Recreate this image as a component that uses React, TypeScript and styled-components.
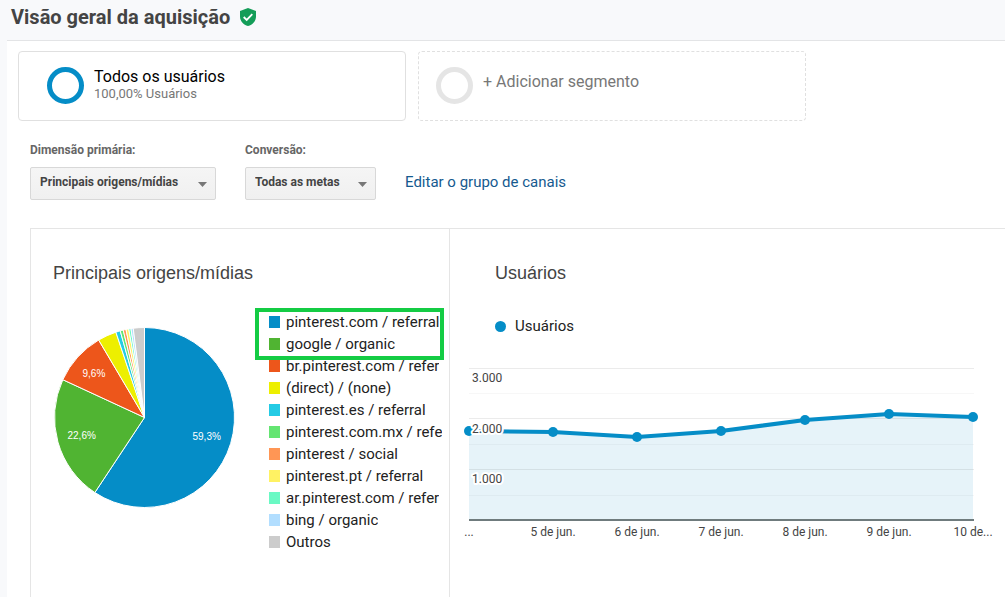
import React from "react";
import styled, { createGlobalStyle } from "styled-components";

const GlobalStyle = createGlobalStyle`
  *, *::before, *::after { box-sizing: border-box; }
  body {
    margin: 0;
    background: #f8f9fb;
    color: #222;
    font-family: Roboto, "Liberation Sans", sans-serif;
  }
  h1, h2, ul { margin: 0; padding: 0; }
`;

const Page = styled.div`
  display: flex;
  flex-direction: column;
  min-height: 100vh;
`;

const Header = styled.header`
  display: flex;
  align-items: center;
  gap: 10px;
  height: 40px;
  padding: 0 11px 6px;
`;

const PageTitle = styled.h1`
  font-size: 20px;
  line-height: 24px;
  font-weight: 700;
  color: #444;
`;

const Content = styled.main`
  flex: 1;
  display: flex;
  flex-direction: column;
  margin-left: 7px;
  padding: 10px 0 0 11px;
  border-top: 1px solid #e3e4e6;
  background: #fff;
`;

const Segments = styled.div`
  display: flex;
  gap: 12px;
`;

const Segment = styled.button<{ $empty?: boolean }>`
  display: flex;
  align-items: center;
  flex: 0 1 388px;
  height: 70px;
  padding: 0 ${(p) => (p.$empty ? 17 : 28)}px 2px;
  gap: 10px;
  border: 1px ${(p) => (p.$empty ? "dashed" : "solid")} #e0e0e0;
  border-radius: 4px;
  background: #fff;
  font-family: inherit;
  text-align: left;
  cursor: pointer;
`;

const Ring = styled.span<{ $color: string }>`
  flex: none;
  width: 37px;
  height: 37px;
  border: 5px solid ${(p) => p.$color};
  border-radius: 50%;
`;

const SegmentText = styled.span`
  display: flex;
  flex-direction: column;
`;

const SegmentName = styled.span<{ $muted?: boolean }>`
  font-size: 16px;
  line-height: 18px;
  color: ${(p) => (p.$muted ? "#777" : "#000")};
  padding-bottom: ${(p) => (p.$muted ? 6 : 0)}px;
`;

const SegmentNote = styled.span`
  font-size: 13px;
  line-height: 16px;
  color: #777;
`;

const Controls = styled.div`
  display: flex;
  align-items: flex-end;
  gap: 29px;
  padding: 21px 0 28px 12px;
`;

const Field = styled.div`
  display: flex;
  flex-direction: column;
  gap: 9px;
`;

const FieldLabel = styled.label`
  font-size: 12px;
  line-height: 16px;
  font-weight: 700;
  color: #666;
`;

const SelectBox = styled.div<{ $width: number }>`
  position: relative;
  width: ${(p) => p.$width}px;
`;

const Select = styled.select`
  display: block;
  width: 100%;
  height: 33px;
  padding: 0 28px 4px 9px;
  appearance: none;
  border: 1px solid #d8d8d8;
  border-radius: 2px;
  background: linear-gradient(#f5f5f5, #f0f0f0);
  color: #444;
  font: 700 12px/16px Roboto, "Liberation Sans", sans-serif;
`;

const Arrow = styled.svg`
  position: absolute;
  right: 9px;
  top: 15px;
  pointer-events: none;
`;

const TextLink = styled.a`
  font-size: 15px;
  line-height: 18px;
  padding-bottom: 9px;
  color: #155a8f;
  text-decoration: none;
`;

const Panels = styled.div`
  flex: 1;
  display: flex;
  margin-left: 12px;
  border-top: 1px solid #e5e5e5;
  border-left: 1px solid #e5e5e5;
`;

const SourcePanel = styled.section`
  flex: 0 0 419px;
  min-width: 0;
  padding: 32px 5px 0 22px;
  border-right: 1px solid #e5e5e5;
`;

const UsersPanel = styled.section`
  flex: 1;
  min-width: 0;
  padding-top: 32px;
`;

const PanelTitle = styled.h2<{ $indent?: boolean }>`
  padding-left: ${(p) => (p.$indent ? 45 : 0)}px;
  font-family: "Liberation Sans", sans-serif;
  font-size: 18px;
  line-height: 24px;
  font-weight: 400;
  color: #444;
`;

const PieRow = styled.div`
  display: flex;
  align-items: flex-start;
  gap: 34px;
  padding-top: 26px;
`;

const Pie = styled.svg`
  flex: none;
  margin-top: 15px;
`;

const PieLabel = styled.text`
  font: 10px "Liberation Sans", sans-serif;
  fill: #fff;
`;

const Legend = styled.ul`
  position: relative;
  flex: 1;
  min-width: 0;
  list-style: none;
`;

const LegendItem = styled.li`
  display: flex;
  align-items: center;
  gap: 6px;
  height: 22px;
  font-size: 15px;
  line-height: 22px;
  white-space: nowrap;
`;

const Swatch = styled.span<{ $color: string }>`
  flex: none;
  width: 11px;
  height: 12px;
  background: ${(p) => p.$color};
`;

const LegendText = styled.span`
  min-width: 0;
  overflow: hidden;
  color: #222;
`;

const Highlight = styled.div`
  position: absolute;
  top: -3px;
  left: -14px;
  right: 0;
  height: 52px;
  border: 4px solid #14cc44;
`;

const SeriesKey = styled.div`
  display: flex;
  align-items: center;
  gap: 9px;
  padding: 32px 0 0 45px;
  font-size: 15px;
  line-height: 18px;
  color: #222;
`;

const Dot = styled.span`
  width: 11px;
  height: 11px;
  border-radius: 50%;
  background: #058dc7;
`;

const LineChart = styled.svg`
  display: block;
  width: 100%;
  height: auto;
  margin-top: 15px;
`;

const AxisText = styled.text<{ $halo?: boolean }>`
  font: 12px Roboto, "Liberation Sans", sans-serif;
  fill: #444;
  stroke: ${(p) => (p.$halo ? "#fff" : "none")};
  stroke-width: 4px;
  stroke-linejoin: round;
  paint-order: stroke;
`;

const sources = [
  { name: "pinterest.com / referral", color: "#058dc7", share: 59.3 },
  { name: "google / organic", color: "#50b432", share: 22.6 },
  { name: "br.pinterest.com / refer", color: "#ed561b", share: 9.6 },
  { name: "(direct) / (none)", color: "#edef00", share: 3.35 },
  { name: "pinterest.es / referral", color: "#24cbe5", share: 0.8 },
  { name: "pinterest.com.mx / refe", color: "#64e572", share: 0.55 },
  { name: "pinterest / social", color: "#ff9655", share: 0.5 },
  { name: "pinterest.pt / referral", color: "#fff263", share: 0.5 },
  { name: "ar.pinterest.com / refer", color: "#6af9c4", share: 0.4 },
  { name: "bing / organic", color: "#b2deff", share: 0.4 },
  { name: "Outros", color: "#cccccc", share: 2 },
];

const R = 90;

function pointAt(share: number) {
  const a = (share / 100) * Math.PI * 2;
  return `${R + R * Math.sin(a)} ${R - R * Math.cos(a)}`;
}

function PieChart() {
  let start = 0;
  const slices = sources.map((s) => {
    const end = start + s.share;
    const d = `M${R} ${R}L${pointAt(start)}A${R} ${R} 0 ${s.share > 50 ? 1 : 0} 1 ${pointAt(end)}Z`;
    start = end;
    return <path key={s.name} d={d} fill={s.color} stroke="#fff" strokeWidth="1" />;
  });
  return (
    <Pie width="182" height="182" viewBox="-1.5 -1.5 182 182" role="img" aria-label="Principais origens/mídias">
      {slices}
      <PieLabel x="138" y="112">59,3%</PieLabel>
      <PieLabel x="13" y="111">22,6%</PieLabel>
      <PieLabel x="28" y="49">9,6%</PieLabel>
    </Pie>
  );
}

const points = [
  [19, 81], [103, 82], [187, 87], [271, 81], [355, 70], [439, 64], [523, 67],
];
const days = ["...", "5 de jun.", "6 de jun.", "7 de jun.", "8 de jun.", "9 de jun.", "10 de..."];
const line = points.map((p) => p.join(" ")).join("L");

function UsersChart() {
  return (
    <LineChart viewBox="0 0 555 200" role="img" aria-label="Usuários por dia">
      <path d={`M${line}V169H19Z`} fill="#058dc7" fillOpacity="0.1" />
      {[18, 43, 68, 94, 119, 145].map((y, i) => (
        <rect key={y} x="19" y={y} width="505" height="1" fill="#000" fillOpacity={i % 2 ? 0.03 : 0.08} />
      ))}
      <rect x="19" y="169" width="505" height="2" fill="#6f7b7d" />
      <path d={`M${line}`} fill="none" stroke="#058dc7" strokeWidth="4" strokeLinejoin="round" />
      {points.map(([x, y]) => (
        <circle key={x} cx={x} cy={y} r="5" fill="#058dc7" />
      ))}
      <AxisText $halo x="22" y="32">3.000</AxisText>
      <AxisText $halo x="22" y="83">2.000</AxisText>
      <AxisText $halo x="22" y="133">1.000</AxisText>
      {days.map((d, i) => (
        <AxisText key={d} x={19 + i * 84} y="186" textAnchor="middle">{d}</AxisText>
      ))}
    </LineChart>
  );
}

function DropDown({ id, label, width, value }: { id: string; label: string; width: number; value: string }) {
  return (
    <Field>
      <FieldLabel htmlFor={id}>{label}</FieldLabel>
      <SelectBox $width={width}>
        <Select id={id} defaultValue={value}>
          <option>{value}</option>
        </Select>
        <Arrow width="9" height="5" viewBox="0 0 9 5" aria-hidden="true">
          <path d="M0 0H9L4.5 5Z" fill="#777" />
        </Arrow>
      </SelectBox>
    </Field>
  );
}

export default function App() {
  return (
    <Page>
      <GlobalStyle />
      <Header>
        <PageTitle>Visão geral da aquisição</PageTitle>
        <svg width="16" height="18" viewBox="0 0 16 18" aria-hidden="true">
          <path d="M8 0L16 3V8.5C16 13 12.6 16.8 8 18C3.4 16.8 0 13 0 8.5V3Z" fill="#149d58" />
          <path d="M3.7 9L6.7 12L12.3 6.2" fill="none" stroke="#fff" strokeWidth="1.8" />
        </svg>
      </Header>
      <Content>
        <Segments>
          <Segment type="button">
            <Ring $color="#058dc7" />
            <SegmentText>
              <SegmentName>Todos os usuários</SegmentName>
              <SegmentNote>100,00% Usuários</SegmentNote>
            </SegmentText>
          </Segment>
          <Segment type="button" $empty>
            <Ring $color="#e5e5e5" />
            <SegmentName $muted>+ Adicionar segmento</SegmentName>
          </Segment>
        </Segments>
        <Controls>
          <DropDown id="dimension" label="Dimensão primária:" width={186} value="Principais origens/mídias" />
          <DropDown id="conversion" label="Conversão:" width={131} value="Todas as metas" />
          <TextLink href="#canais">Editar o grupo de canais</TextLink>
        </Controls>
        <Panels>
          <SourcePanel>
            <PanelTitle>Principais origens/mídias</PanelTitle>
            <PieRow>
              <PieChart />
              <Legend>
                {sources.map((s) => (
                  <LegendItem key={s.name}>
                    <Swatch $color={s.color} />
                    <LegendText>{s.name}</LegendText>
                  </LegendItem>
                ))}
                <Highlight />
              </Legend>
            </PieRow>
          </SourcePanel>
          <UsersPanel>
            <PanelTitle $indent>Usuários</PanelTitle>
            <SeriesKey>
              <Dot />
              Usuários
            </SeriesKey>
            <UsersChart />
          </UsersPanel>
        </Panels>
      </Content>
    </Page>
  );
}
